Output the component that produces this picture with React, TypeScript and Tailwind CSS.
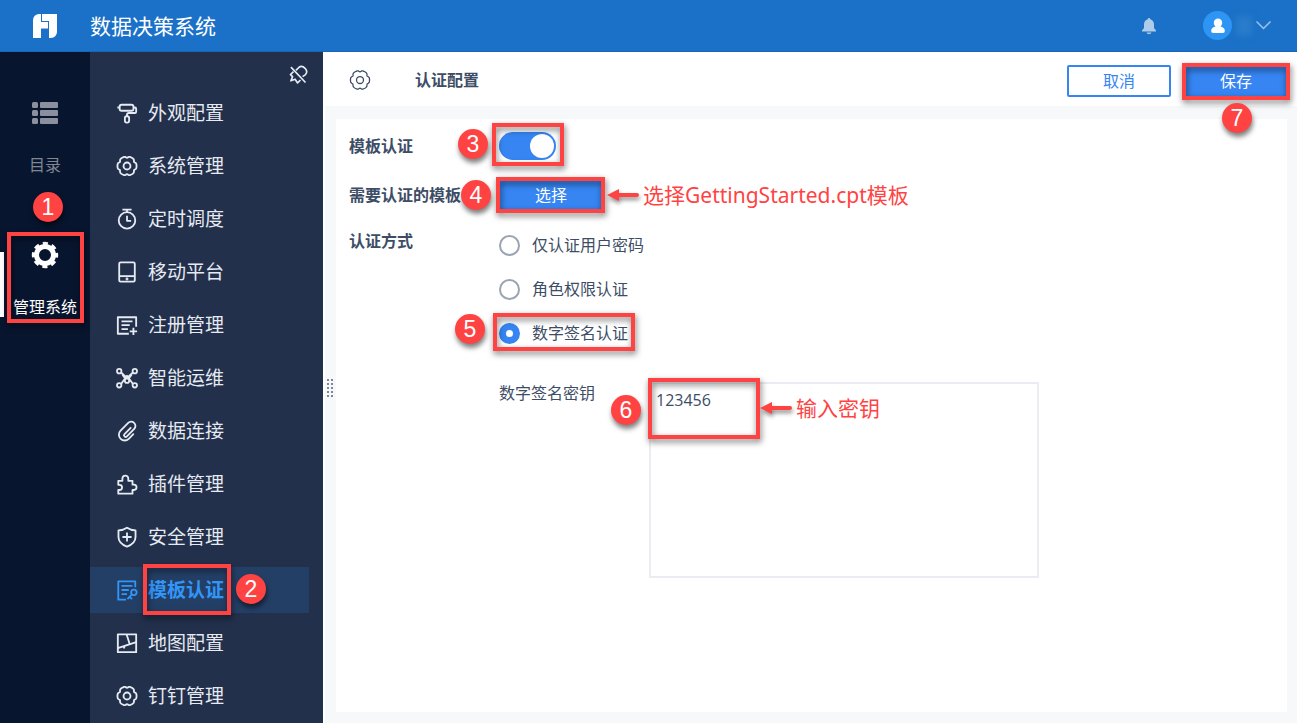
import { useState } from 'react';
import type { ReactNode } from 'react';
import clsx from 'clsx';

// six-lobed cog outline, shared by several menu entries
const cogPath =
  Array.from({ length: 120 }, (_, i) => {
    const a = (i * Math.PI) / 60;
    const notch = Math.pow((1 - Math.cos(6 * a)) / 2, 4);
    const r = 10.4 - 1.5 * notch;
    return `${i ? 'L' : 'M'}${(12 + r * Math.cos(a)).toFixed(2)} ${(12 + r * Math.sin(a)).toFixed(2)}`;
  }).join('') + 'Z';

function LineIcon({ children, className = 'w-[22px] h-[22px]' }: { children: ReactNode; className?: string }) {
  return (
    <svg
      viewBox="0 0 24 24"
      fill="none"
      stroke="currentColor"
      strokeWidth="2"
      strokeLinejoin="round"
      className={clsx('shrink-0', className)}
      aria-hidden="true"
    >
      {children}
    </svg>
  );
}

const cog = (
  <>
    <path d={cogPath} />
    <circle cx="12" cy="12" r="3.8" />
  </>
);

const menu = [
  {
    name: '外观配置',
    icon: (
      <>
        <rect x="4" y="3" width="15" height="6.500" rx="2" />
        <path d="M1.500 6H4M19 6h1.500a1.500 1.500 0 0 1 1.500 1.500V10.500a1.500 1.500 0 0 1-1.500 1.500H14a2 2 0 0 0-2 2V16" />
        <rect x="9.700" y="15.500" width="4.600" height="7" rx="2" />
      </>
    ),
  },
  { name: '系统管理', icon: cog },
  {
    name: '定时调度',
    icon: (
      <>
        <circle cx="12" cy="13.500" r="9" />
        <path d="M7 1.800h10M12 2v3M12 8.500V14h4.500" />
      </>
    ),
  },
  {
    name: '移动平台',
    icon: (
      <>
        <rect x="3.500" y="1.500" width="17" height="21" rx="1.500" />
        <path d="M4 16.500h16" />
        <circle cx="12" cy="19.600" r=".6" />
      </>
    ),
  },
  {
    name: '注册管理',
    icon: <path d="M22 14V3.500H2v18h12M6 8h12M6 12.200h9M6 16.500h7M19 15v8M15 19h8" />,
  },
  {
    name: '智能运维',
    icon: (
      <>
        <circle cx="3.500" cy="4.500" r="2.400" />
        <circle cx="20.500" cy="4.500" r="2.400" />
        <circle cx="3.500" cy="20" r="2.400" />
        <circle cx="20.500" cy="20" r="2.400" />
        <circle cx="12" cy="15" r="2.400" />
        <path d="M5.500 6L12 12l6.500-6M5.500 18.500L12 9.500l6.500 9M7 8.500l3.500 4.500M17 8.500l-3.500 4.500" />
      </>
    ),
  },
  {
    name: '数据连接',
    icon: (
      <path
        strokeLinecap="round"
        d="M16 8.500l-6.700 6.800a1.800 1.800 0 0 0 2.600 2.600l8-8.200a4.600 4.600 0 0 0-.2-6.600 4.600 4.600 0 0 0-6.400.1L5 11.600a6.300 6.300 0 0 0 .1 9 6.300 6.300 0 0 0 8.800-.1l5-5"
      />
    ),
  },
  {
    name: '插件管理',
    icon: (
      <path d="M2.500 8.500H7V6a3.200 3.200 0 0 1 6.400 0v2.500H18v4.200h1.500a2.900 2.900 0 0 1 0 5.800H18v4H2.500v-4h1.300a2.800 2.800 0 0 0 0-5.600H2.500Z" />
    ),
  },
  {
    name: '安全管理',
    icon: (
      <>
        <path d="M12 1.800c3 2 6 2.800 9.300 3V12c0 5-4 8.500-9.300 10.500C6.700 20.500 2.700 17 2.700 12V4.800C6 4.600 9 3.800 12 1.800Z" />
        <path d="M12 7v10M7 12h10" />
      </>
    ),
  },
  {
    name: '模板认证',
    icon: (
      <>
        <path d="M21 9V2.500H2.500v20H11M6 7.500h12M6 12h8M6 16.500h6" />
        <circle cx="19.500" cy="14.500" r="3" />
        <path d="M17.300 16.800L12.500 22M15 19.500l2.500 2.500" />
      </>
    ),
  },
  {
    name: '地图配置',
    icon: (
      <>
        <rect x="2" y="2.500" width="20" height="19.500" />
        <path d="M2 17.500L22 11M11.500 2.500l3.500 10.800M9.500 15.300L8.500 18" />
      </>
    ),
  },
  { name: '钉钉管理', icon: cog },
];

const modes = ['仅认证用户密码', '角色权限认证', '数字签名认证'];

function Frame({ className }: { className: string }) {
  return (
    <span
      className={clsx(
        'pointer-events-none absolute z-10 border-4 border-[#ff4343] drop-shadow-[1px_3px_3px_rgba(0,0,0,0.55)]',
        className,
      )}
    />
  );
}

function Step({ n, className }: { n: number; className: string }) {
  return (
    <span
      className={clsx(
        'pointer-events-none absolute z-20 flex h-[30px] w-[30px] items-center justify-center rounded-full bg-[#ff4343] font-["Liberation_Sans",sans-serif] text-[23px] font-normal leading-none text-white shadow-[1px_4px_5px_rgba(0,0,0,0.5)]',
        className,
      )}
    >
      {n}
    </span>
  );
}

function Note({ text, className }: { text: string; className: string }) {
  return (
    <span
      className={clsx(
        'pointer-events-none absolute z-10 flex items-center gap-1 whitespace-nowrap font-["Noto_Sans","Noto_Sans_CJK_SC",sans-serif] text-[21px] leading-7 text-[#ff4343]',
        className,
      )}
    >
      <svg viewBox="0 0 32 14" className="h-[14px] w-8 drop-shadow-[1px_3px_2px_rgba(0,0,0,0.45)]" fill="currentColor" aria-hidden="true">
        <path d="M0 7L12 1V5H30a2 2 0 0 1 0 4H12V13Z" />
      </svg>
      {text}
    </span>
  );
}

export default function App() {
  const [active, setActive] = useState('模板认证');
  const [enabled, setEnabled] = useState(true);
  const [mode, setMode] = useState('数字签名认证');
  const [secret, setSecret] = useState('123456');

  return (
    <div className='flex min-h-screen flex-col bg-white font-["Open_Sans","Noto_Sans_CJK_SC",sans-serif] text-base leading-6 text-[#3d4d66]'>
      <header className="flex h-[52px] items-center border-b border-[#1765b8] bg-[#1a71c7] pr-[26px] text-white">
        <div className="flex w-[90px] justify-center">
          <svg viewBox="0 0 24 24" className="h-6 w-6" fill="#fff" aria-hidden="true">
            <path d="M6 0H8V8H15V14.500H8V24H0V6A6 6 0 0 1 6 0Z" />
            <path d="M9 0H24V18A6 6 0 0 1 18 24H16V7H9Z" />
          </svg>
        </div>
        <h1 className="text-[21px] leading-7">数据决策系统</h1>
        <div className="ml-auto flex items-center">
          <button type="button" aria-label="消息" className="text-[#aecbea]">
            <svg viewBox="0 0 16 18" className="h-[18px] w-4" fill="currentColor" aria-hidden="true">
              <path d="M8 1a1.200 1.200 0 0 1 1.200 1.300C11.800 2.900 13 5 13 7.500V11l2 2.500V14.500H1V13.500L3 11V7.500C3 5 4.200 2.900 6.800 2.300A1.200 1.200 0 0 1 8 1ZM5.500 15.500h5c-.5 1.200-1.400 1.700-2.500 1.700s-2-.5-2.500-1.700Z" />
            </svg>
          </button>
          <button type="button" aria-label="用户" className="ml-[46px] flex items-center">
            <span className="flex h-[29px] w-[29px] items-center justify-center rounded-full bg-[#2f95f5]">
              <svg viewBox="0 0 16 16" className="h-4 w-4" fill="#fff" aria-hidden="true">
                <path d="M8 .5a4.200 4.200 0 0 1 4.200 4.200c0 1.800-.9 3-1.900 3.900 2.600.7 4.500 1.700 4.500 4.200 0 1.600-.8 2.200-2 2.200H3.200c-1.200 0-2-.6-2-2.200 0-2.500 1.900-3.500 4.500-4.200-1-.9-1.900-2.100-1.900-3.900A4.200 4.200 0 0 1 8 .5Z" />
              </svg>
            </span>
            <span className="ml-1 h-5 w-4 bg-[#2a7bcb] blur-[3px]" />
            <svg viewBox="0 0 15 9" className="ml-1 h-[9px] w-[15px]" fill="none" stroke="#9cc3ea" strokeWidth="1.500" aria-hidden="true">
              <path d="M.5 .5l7 7 7-7" />
            </svg>
          </button>
        </div>
      </header>

      <div className="flex flex-1">
        <nav className="flex w-[90px] shrink-0 flex-col gap-16 bg-[#08152f] pt-[47px]">
          <button type="button" className="flex flex-col items-center text-[#7f8694]">
            <span className="flex h-7 items-center">
              <svg viewBox="0 0 26 22" className="h-[22px] w-[26px]" fill="#8b909e" aria-hidden="true">
                {[0, 8, 16].map((y) => (
                  <g key={y}>
                    <rect x="0" y={y} width="6" height="6" rx="1.500" />
                    <rect x="8" y={y} width="18" height="6" rx="1" />
                  </g>
                ))}
              </svg>
            </span>
            <span className="mt-[26px]">目录</span>
          </button>
          <button type="button" className="relative flex flex-col items-center text-white">
            <span className="absolute left-0 top-[11px] h-[65px] w-1 bg-white" />
            <svg viewBox="0 0 28 28" className="h-7 w-7" fill="none" stroke="#fff" aria-hidden="true">
              <circle cx="14" cy="14" r="8.500" strokeWidth="5" />
              <circle cx="14" cy="14" r="11.600" strokeWidth="3.200" strokeDasharray="5.100 4.010" strokeDashoffset="2.550" />
            </svg>
            <span className="mt-[26px]">管理系统</span>
            <Frame className="-bottom-1 -top-[9px] left-[7px] right-[6px]" />
            <Step n={1} className="-top-[49px] left-[33px]" />
          </button>
        </nav>

        <aside className="relative w-[233px] shrink-0 bg-[#22304c] pt-[38px] text-[#e6eaf1]">
          <button type="button" aria-label="取消固定" className="absolute right-[15px] top-[13px]">
            <LineIcon className="h-5 w-5">
              <path d="M3.500 2.500L21 21M9.500 6.500L13 3c2.500-2 5.500-1 7.500 1s2.500 5 .5 7.500L17.500 14M6.500 8L3 11.500l2.500 2.500-2 5 5-2 3 4.500 3.500-3.500" />
            </LineIcon>
          </button>
          <nav className="flex flex-col gap-[7px]">
            {menu.map((item) => (
              <button
                key={item.name}
                type="button"
                onClick={() => setActive(item.name)}
                className={clsx(
                  'mr-[14px] flex h-[46px] items-center gap-[10px] pl-[26px]',
                  active === item.name && 'bg-[#243f66] font-bold text-[#3296f8]',
                )}
              >
                <LineIcon>{item.icon}</LineIcon>
                <span className="relative text-[19px] leading-[26px]">
                  {item.name}
                  {item.name === '模板认证' && (
                    <>
                      <Frame className="-bottom-3 -left-[5px] -right-[7px] -top-[13px]" />
                      <Step n={2} className="-right-[42px] -top-[3px]" />
                    </>
                  )}
                </span>
              </button>
            ))}
          </nav>
        </aside>

        <main className="flex min-w-0 flex-1 flex-col border-l-2 border-white bg-[#f7f8fa]">
          <div className="flex h-[54px] items-center bg-white pl-6 pr-[9px] pt-[2px]">
            <LineIcon className="h-[22px] w-[22px]">
              <g strokeWidth="1.400">{cog}</g>
            </LineIcon>
            <h2 className="ml-11 font-bold">认证配置</h2>
            <button
              type="button"
              className="ml-auto mt-[2px] h-8 w-[104px] rounded-[2px] border-2 border-[#3685f2] bg-white leading-7 text-[#3685f2]"
            >
              取消
            </button>
            <div className="relative ml-[13px] mt-[2px]">
              <button type="button" className="block h-8 w-[104px] rounded-[2px] bg-[#3685f2] leading-7 text-white">
                保存
              </button>
              <Frame className="-bottom-[3px] -left-[2px] -right-[2px] -top-[2px]" />
              <Step n={7} className="left-[38px] top-[38px]" />
            </div>
          </div>

          <div className="flex flex-1 pb-[11px] pr-[10px] pt-[13px]">
            <div className="flex w-[11px] shrink-0 items-center pb-14 pl-[2px]">
              <div className="grid grid-cols-2 gap-[2px]">
                {Array.from({ length: 10 }, (_, i) => (
                  <span key={i} className="h-[2px] w-[2px] bg-[#7d8797]" />
                ))}
              </div>
            </div>

            <form className="min-w-0 flex-1 bg-white pl-[13px] pt-[10px]">
              <div className="flex h-[34px] items-center">
                <label htmlFor="auth" className="w-[150px] shrink-0 font-bold">
                  模板认证
                </label>
                <div className="relative flex">
                  <input
                    id="auth"
                    type="checkbox"
                    role="switch"
                    checked={enabled}
                    onChange={(e) => setEnabled(e.target.checked)}
                    className="h-7 w-[57px] appearance-none rounded-full bg-[#c5ccd6] p-[2px] before:block before:h-6 before:w-6 before:rounded-full before:bg-white checked:bg-[#3685f2] checked:before:ml-[29px]"
                  />
                  <Frame className="-bottom-[6px] -left-[7px] -right-2 -top-[9px]" />
                  <Step n={3} className="-left-[41px] -top-[3px]" />
                </div>
              </div>

              <div className="mt-4 flex items-center">
                <label htmlFor="choose" className="w-[150px] shrink-0 font-bold">
                  需要认证的模板
                </label>
                <div className="relative">
                  <button id="choose" type="button" className="block h-8 w-[104px] rounded-[2px] bg-[#3685f2] text-white">
                    选择
                  </button>
                  <Frame className="-bottom-[2px] -left-[3px] -right-[2px] -top-[2px]" />
                  <Step n={4} className="-left-[38px] top-px" />
                  <Note text="选择GettingStarted.cpt模板" className="left-[108px] top-[2px]" />
                </div>
              </div>

              <div role="radiogroup" aria-labelledby="mode" className="mt-3 flex">
                <span id="mode" className="mt-[6px] w-[150px] shrink-0 font-bold">
                  认证方式
                </span>
                <div>
                  {modes.map((name) => (
                    <label key={name} className="relative flex h-11 items-center gap-3">
                      <input
                        type="radio"
                        name="mode"
                        checked={mode === name}
                        onChange={() => setMode(name)}
                        className="h-[21px] w-[21px] appearance-none rounded-full border-2 border-[#9ba4b3] bg-white checked:border-[7px] checked:border-[#3685f2]"
                      />
                      {name}
                      {name === '数字签名认证' && (
                        <>
                          <Frame className="-left-[6px] bottom-1 top-[2px] w-[142px]" />
                          <Step n={5} className="-left-11 top-[3px]" />
                        </>
                      )}
                    </label>
                  ))}
                </div>
              </div>

              <div className="ml-[150px] mt-[27px] flex items-start">
                <label htmlFor="secret" className="w-[150px] shrink-0 leading-[22px]">
                  数字签名密钥
                </label>
                <div className="relative w-[390px]">
                  <textarea
                    id="secret"
                    value={secret}
                    onChange={(e) => setSecret(e.target.value)}
                    className="block h-[196px] w-full resize-none border-2 border-[#ebecf1] px-[5px] py-1 outline-none"
                  />
                  <Frame className="-left-px -top-1 h-[61px] w-28" />
                  <Step n={6} className="-left-[38px] top-[13px]" />
                  <Note text="输入密钥" className="left-[111px] top-3" />
                </div>
              </div>
            </form>
          </div>
        </main>
      </div>
    </div>
  );
}
